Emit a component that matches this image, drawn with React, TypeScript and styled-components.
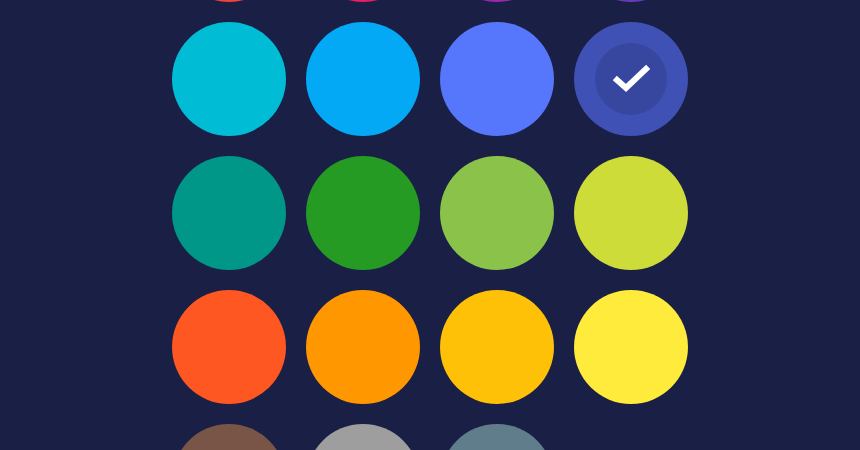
import React from 'react'
import styled, { createGlobalStyle } from 'styled-components'

const GlobalStyle = createGlobalStyle`
    html, body {
        margin: 0;
        padding: 0;
        background: #1a1f46;
        overflow: hidden;
        font-family: 'Roboto', sans-serif;
    }
`

const colors = [
    '#f44336', '#e91e63', '#9c27b0', '#673ab7',
    '#00bcd4', '#03a9f4', '#5677fc', '#3f51b5',
    '#009688', '#259b24', '#8bc34a', '#cddc39',
    '#ff5722', '#ff9800', '#ffc107', '#ffeb3b',
    '#795548', '#9e9e9e', '#607d8b',
]

const selected = '#3f51b5'

export default function App() {
    return (
        <Page>
            <GlobalStyle />
            <Palette>
                {colors.map((c) => (
                    <Swatch key={c} $color={c} aria-label={c}>
                        {c === selected && (
                            <Ring>
                                <svg width="44" height="44" viewBox="0 0 44 44">
                                    <polyline
                                        points="8,23 17,31 37,12"
                                        fill="none"
                                        stroke="#fff"
                                        strokeWidth="6"
                                        strokeLinecap="square"
                                        strokeLinejoin="miter"
                                    />
                                </svg>
                            </Ring>
                        )}
                    </Swatch>
                ))}
            </Palette>
        </Page>
    )
}

const Page = styled.div`
    width: 860px;
    height: 450px;
    display: flex;
    justify-content: center;
    align-items: flex-start;
    overflow: hidden;
`

const Palette = styled.div`
    margin-top: -112px;
    display: grid;
    grid-template-columns: repeat(4, 114px);
    grid-auto-rows: 114px;
    gap: 20px;
`

const Swatch = styled.button<{ $color: string }>`
    width: 114px;
    height: 114px;
    border: none;
    padding: 0;
    border-radius: 50%;
    background: ${(p) => p.$color};
    display: flex;
    align-items: center;
    justify-content: center;
    cursor: pointer;
`

const Ring = styled.div`
    width: 72px;
    height: 72px;
    border-radius: 50%;
    background: rgba(0, 0, 0, 0.12);
    display: flex;
    align-items: center;
    justify-content: center;
`
